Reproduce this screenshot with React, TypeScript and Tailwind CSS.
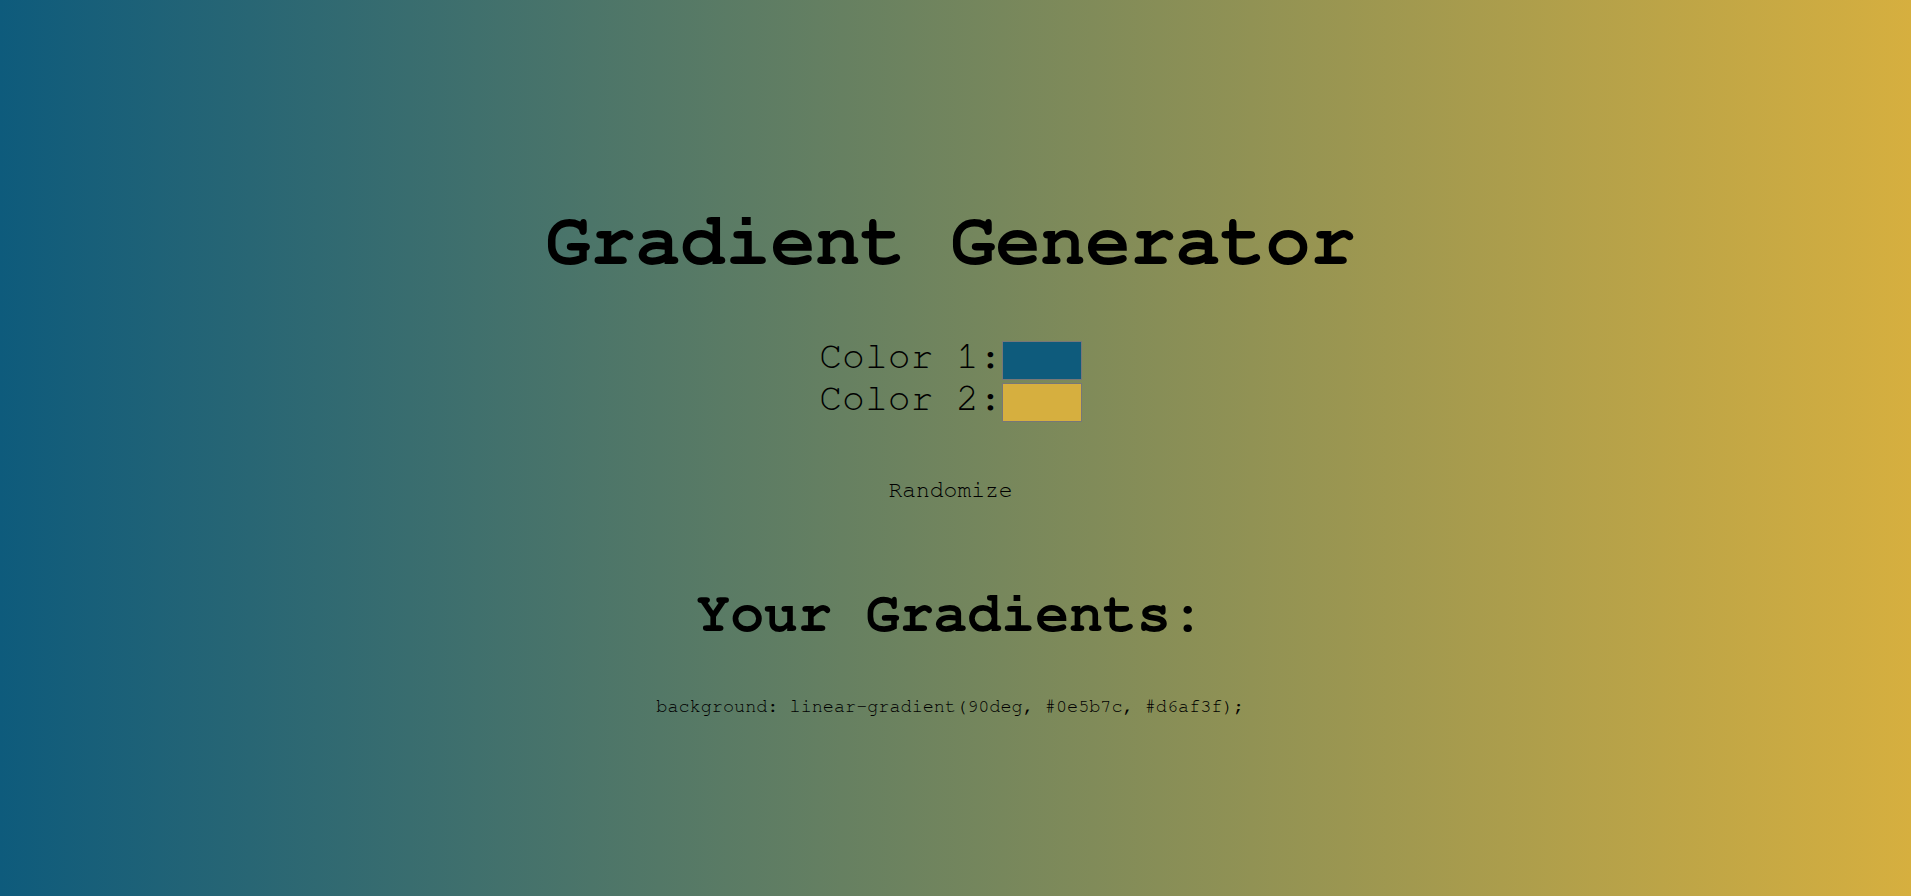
import { useState } from 'react';

const randomHex = () =>
  '#' +
  Math.floor(Math.random() * 0xffffff)
    .toString(16)
    .padStart(6, '0');

export default function App() {
  const [color1, setColor1] = useState('#0e5b7c');
  const [color2, setColor2] = useState('#d6af3f');

  const css = `background: linear-gradient(90deg, ${color1}, ${color2});`;

  return (
    <div
      className="min-h-screen w-full pr-[10px] pt-[204px] flex flex-col items-center text-black font-['Nimbus_Mono_PS','Nimbus_Mono_L','FreeMono','Courier_New',Courier,'Liberation_Mono',monospace]"
      style={{ background: `linear-gradient(90deg, ${color1}, ${color2})` }}
    >
      <h1 className="text-[75px] leading-[75px] font-bold">Gradient Generator</h1>

      <div className="mt-[62px] flex flex-col gap-[3px]">
        <label className="flex items-center h-[39px]">
          <span className="text-[38px] leading-[38px] pb-2">Color 1:</span>
          <input
            type="color"
            value={color1}
            onChange={(e) => setColor1(e.target.value)}
            className="w-[80px] h-[39px] border-0 p-0 bg-transparent cursor-pointer [&::-webkit-color-swatch-wrapper]:p-0 [&::-webkit-color-swatch]:border [&::-webkit-color-swatch]:border-[#777]"
          />
        </label>
        <label className="flex items-center h-[39px]">
          <span className="text-[38px] leading-[38px] pb-2">Color 2:</span>
          <input
            type="color"
            value={color2}
            onChange={(e) => setColor2(e.target.value)}
            className="w-[80px] h-[39px] border-0 p-0 bg-transparent cursor-pointer [&::-webkit-color-swatch-wrapper]:p-0 [&::-webkit-color-swatch]:border [&::-webkit-color-swatch]:border-[#777]"
          />
        </label>
      </div>

      <button
        onClick={() => {
          setColor1(randomHex());
          setColor2(randomHex());
        }}
        className="mt-[57px] text-[23px] leading-[24px] bg-transparent border-0 p-0 cursor-pointer"
      >
        Randomize
      </button>

      <h2 className="mt-[83px] text-[56.5px] leading-[56px] font-bold">Your Gradients:</h2>

      <p className="mt-[55px] text-[18.5px] leading-[19px]">{css}</p>
    </div>
  );
}
